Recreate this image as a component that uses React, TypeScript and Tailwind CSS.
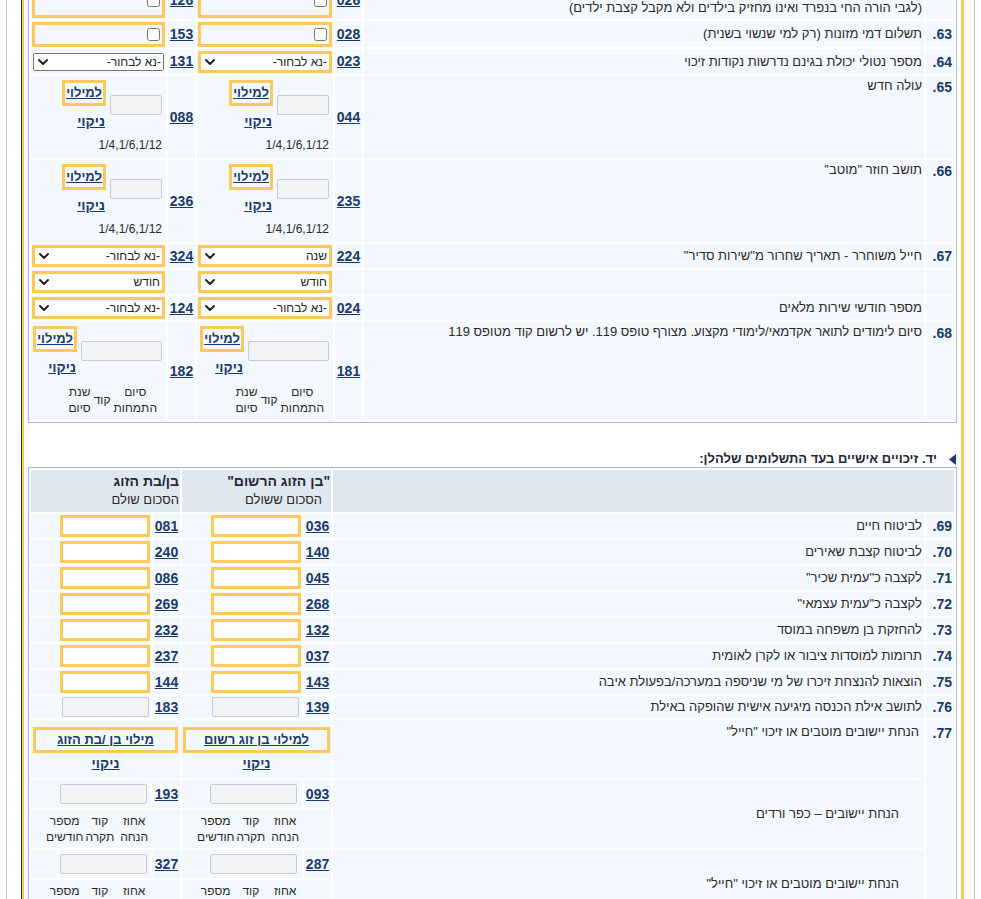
import React from 'react';
import { ChevronDown } from 'lucide-react';

const CELL = 'bg-[#f3f8fe]';
const YEL = 'border-[3px] border-[#fdc95c]';
const NUM = `${CELL} text-right pr-[2px] font-bold text-[14px] text-[#1b3a68]`;
const LABEL = `${CELL} text-right pr-[2px]`;
const CODE = `${CELL} text-center`;

const Code = ({ children, size = 'text-[14px]' }: { children: React.ReactNode; size?: string }) => (
  <a href="#" className={`font-bold underline ${size} text-[#1b3a68]`}>
    {children}
  </a>
);

const Check = ({ h = 'h-[25px]' }: { h?: string }) => (
  <div className={`${YEL} ${h} flex items-center pr-[2px]`}>
    <input type="checkbox" className="w-[13px] h-[13px]" />
  </div>
);

const Select = ({ value, hl = true }: { value: string; hl?: boolean }) => (
  <div
    className={`relative bg-white ${
      hl ? `${YEL} h-[22px]` : 'border border-[#767676] rounded-[2px] h-[18px] mx-[1px]'
    }`}
  >
    <select className="appearance-none w-full h-full bg-white text-[12px] leading-[14px] pr-[2px] pl-5 text-[#222] outline-none">
      <option>{value}</option>
    </select>
    <ChevronDown
      size={16}
      strokeWidth={3}
      className="absolute left-[1px] top-1/2 -translate-y-1/2 pointer-events-none text-[#222]"
    />
  </div>
);

const Disabled = ({ w }: { w: string }) => (
  <input disabled className={`${w} h-[20px] border border-[#c8ccd2] rounded-[2px] bg-[#f2f3f5] block`} />
);

const FillBlock = ({ inputW, footer }: { inputW: string; footer: React.ReactNode }) => (
  <div className="pt-[4px] pr-[4px] pb-[4px]">
    <div className="flex items-center gap-[4px]">
      <Disabled w={inputW} />
      <div className="flex flex-col items-start">
        <div className={`${YEL} px-[1px] leading-[20px]`}>
          <Code size="text-[13px]">למילוי</Code>
        </div>
        <div className="mt-[7px] leading-[16px] pr-[1px]">
          <Code>ניקוי</Code>
        </div>
      </div>
    </div>
    {footer}
  </div>
);

const Fractions = () => <div className="mt-[7px] text-[12px] leading-[16px] text-right">1/4,1/6,1/12</div>;

const StudyLabels = () => (
  <div className="mt-[8px] flex items-center gap-[3px] text-[12px] leading-[16px] pr-[5px]">
    <div className="text-center">
      סיום
      <br />
      התמחות
    </div>
    <div>קוד</div>
    <div className="text-center">
      שנת
      <br />
      סיום
    </div>
  </div>
);

const DiscountLabels = () => (
  <div className="flex items-center text-[12px] leading-[16px] pr-[32px]">
    <div className="text-center ml-[6px]">
      אחוז
      <br />
      הנחה
    </div>
    <div className="text-center ml-[2px]">
      קוד
      <br />
      תקרה
    </div>
    <div className="text-center">
      מספר
      <br />
      חודשים
    </div>
  </div>
);

const AmountInput = () => <input className={`${YEL} w-[90px] h-[22px] bg-white block`} />;

const amountRows = [
  { n: '69', label: 'לביטוח חיים', a: '036', b: '081' },
  { n: '70', label: 'לביטוח קצבת שאירים', a: '140', b: '240' },
  { n: '71', label: 'לקצבה כ"עמית שכיר"', a: '045', b: '086' },
  { n: '72', label: 'לקצבה כ"עמית עצמאי"', a: '268', b: '269' },
  { n: '73', label: 'להחזקת בן משפחה במוסד', a: '132', b: '232' },
  { n: '74', label: 'תרומות למוסדות ציבור או לקרן לאומית', a: '037', b: '237' },
  { n: '75', label: 'הוצאות להנצחת זיכרו של מי שניספה במערכה/בפעולת איבה', a: '143', b: '144' },
];

const App = () => {
  return (
    <div
      dir="rtl"
      className="w-[981px] h-[899px] overflow-hidden bg-white font-['Liberation_Sans',Arial,'DejaVu_Sans',sans-serif] text-[13px] leading-[16px] text-[#2a2a2a]"
    >
      <div className="mr-[6px] w-[969px] border-x border-[#c4c4c4] pl-[14px] pr-[10px]">
        <div className="border-l border-[#1e3a66]">
          <div className="border-l-2 border-r-[3px] border-[#fdc95c] pl-[4px] pr-[4px] pb-[60px]">
            {/* section יג – continued */}
            <table className="w-[929px] -mt-[22px] table-fixed border-separate border-spacing-[2px] border border-[#a8bcd5]">
              <colgroup>
                <col className="w-[28px]" />
                <col />
                <col className="w-[27px]" />
                <col className="w-[136px]" />
                <col className="w-[27px]" />
                <col className="w-[135px]" />
              </colgroup>
              <tbody>
                <tr className="h-[38px]">
                  <td className={`${NUM} align-top pt-[3px]`}>62.</td>
                  <td className={LABEL}>
                    הורה החי בנפרד
                    <br />
                    (לגבי הורה החי בנפרד ואינו מחזיק בילדים ולא מקבל קצבת ילדים)
                  </td>
                  <td className={CODE}>
                    <Code>026</Code>
                  </td>
                  <td className={`${CELL} px-[1px]`}>
                    <Check h="h-[36px]" />
                  </td>
                  <td className={CODE}>
                    <Code>126</Code>
                  </td>
                  <td className={`${CELL} px-[1px]`}>
                    <Check h="h-[36px]" />
                  </td>
                </tr>
                <tr className="h-[26px]">
                  <td className={NUM}>63.</td>
                  <td className={LABEL}>תשלום דמי מזונות (רק למי שנשוי בשנית)</td>
                  <td className={CODE}>
                    <Code>028</Code>
                  </td>
                  <td className={`${CELL} px-[1px]`}>
                    <Check />
                  </td>
                  <td className={CODE}>
                    <Code>153</Code>
                  </td>
                  <td className={`${CELL} px-[1px]`}>
                    <Check />
                  </td>
                </tr>
                <tr className="h-[25px]">
                  <td className={NUM}>64.</td>
                  <td className={LABEL}>מספר נטולי יכולת בגינם נדרשות נקודות זיכוי</td>
                  <td className={CODE}>
                    <Code>023</Code>
                  </td>
                  <td className={`${CELL} px-[1px]`}>
                    <Select value="-נא לבחור-" />
                  </td>
                  <td className={CODE}>
                    <Code>131</Code>
                  </td>
                  <td className={`${CELL} px-[1px]`}>
                    <Select value="-נא לבחור-" hl={false} />
                  </td>
                </tr>
                <tr className="h-[82px]">
                  <td className={`${NUM} align-top pt-[3px]`}>65.</td>
                  <td className={`${LABEL} align-top pt-[2px]`}>עולה חדש</td>
                  <td className={CODE}>
                    <Code>044</Code>
                  </td>
                  <td className={`${CELL} align-top`}>
                    <FillBlock inputW="w-[52px]" footer={<Fractions />} />
                  </td>
                  <td className={CODE}>
                    <Code>088</Code>
                  </td>
                  <td className={`${CELL} align-top`}>
                    <FillBlock inputW="w-[52px]" footer={<Fractions />} />
                  </td>
                </tr>
                <tr className="h-[82px]">
                  <td className={`${NUM} align-top pt-[3px]`}>66.</td>
                  <td className={`${LABEL} align-top pt-[2px]`}>תושב חוזר "מוטב"</td>
                  <td className={CODE}>
                    <Code>235</Code>
                  </td>
                  <td className={`${CELL} align-top`}>
                    <FillBlock inputW="w-[52px]" footer={<Fractions />} />
                  </td>
                  <td className={CODE}>
                    <Code>236</Code>
                  </td>
                  <td className={`${CELL} align-top`}>
                    <FillBlock inputW="w-[52px]" footer={<Fractions />} />
                  </td>
                </tr>
                <tr className="h-[24px]">
                  <td className={NUM}>67.</td>
                  <td className={LABEL}>חייל משוחרר - תאריך שחרור מ"שירות סדיר"</td>
                  <td className={CODE}>
                    <Code>224</Code>
                  </td>
                  <td className={`${CELL} px-[1px]`}>
                    <Select value="שנה" />
                  </td>
                  <td className={CODE}>
                    <Code>324</Code>
                  </td>
                  <td className={`${CELL} px-[1px]`}>
                    <Select value="-נא לבחור-" />
                  </td>
                </tr>
                <tr className="h-[24px]">
                  <td className={NUM}></td>
                  <td className={LABEL}></td>
                  <td className={CODE}></td>
                  <td className={`${CELL} px-[1px]`}>
                    <Select value="חודש" />
                  </td>
                  <td className={CODE}></td>
                  <td className={`${CELL} px-[1px]`}>
                    <Select value="חודש" />
                  </td>
                </tr>
                <tr className="h-[24px]">
                  <td className={NUM}></td>
                  <td className={LABEL}>מספר חודשי שירות מלאים</td>
                  <td className={CODE}>
                    <Code>024</Code>
                  </td>
                  <td className={`${CELL} px-[1px]`}>
                    <Select value="-נא לבחור-" />
                  </td>
                  <td className={CODE}>
                    <Code>124</Code>
                  </td>
                  <td className={`${CELL} px-[1px]`}>
                    <Select value="-נא לבחור-" />
                  </td>
                </tr>
                <tr className="h-[98px]">
                  <td className={`${NUM} align-top pt-[3px]`}>68.</td>
                  <td className={`${LABEL} align-top pt-[2px]`}>
                    סיום לימודים לתואר אקדמאי/לימודי מקצוע. מצורף טופס 119. יש לרשום קוד מטופס 119
                  </td>
                  <td className={CODE}>
                    <Code>181</Code>
                  </td>
                  <td className={`${CELL} align-top`}>
                    <FillBlock inputW="w-[81px]" footer={<StudyLabels />} />
                  </td>
                  <td className={CODE}>
                    <Code>182</Code>
                  </td>
                  <td className={`${CELL} align-top`}>
                    <FillBlock inputW="w-[81px]" footer={<StudyLabels />} />
                  </td>
                </tr>
              </tbody>
            </table>

            {/* section יד */}
            <div className="mt-[28px] h-[16px] flex items-center gap-[12px] pr-[1px]">
              <svg width="7" height="11" viewBox="0 0 7 11">
                <polygon points="7,0 7,11 0,5.5" fill="#1b3a68" />
              </svg>
              <span className="font-bold text-[#1e2838]">יד. זיכויים אישיים בעד התשלומים שלהלן:</span>
            </div>

            <table className="w-[929px] table-fixed border-separate border-spacing-[2px] border border-[#a8bcd5]">
              <colgroup>
                <col className="w-[28px]" />
                <col />
                <col className="w-[27px]" />
                <col className="w-[120px]" />
                <col className="w-[27px]" />
                <col className="w-[120px]" />
              </colgroup>
              <tbody>
                <tr className="h-[42px]">
                  <td colSpan={2} className="bg-[#e1e7ef]"></td>
                  <td colSpan={2} className="bg-[#e1e7ef] align-top pt-[3px] pr-[1px] text-right">
                    <div className="font-bold text-[14px] text-[#1e2838]">"בן הזוג הרשום"</div>
                    <div className="pr-[8px] mt-[3px]">הסכום ששולם</div>
                  </td>
                  <td colSpan={2} className="bg-[#e1e7ef] align-top pt-[3px] pr-[1px] text-right">
                    <div className="font-bold text-[14px] text-[#1e2838]">בן/בת הזוג</div>
                    <div className="mt-[3px]">הסכום שולם</div>
                  </td>
                </tr>
                {amountRows.map((r) => (
                  <tr key={r.n} className="h-[24px]">
                    <td className={NUM}>{r.n}.</td>
                    <td className={LABEL}>{r.label}</td>
                    <td className={CODE}>
                      <Code>{r.a}</Code>
                    </td>
                    <td className={`${CELL} pr-[1px]`}>
                      <AmountInput />
                    </td>
                    <td className={CODE}>
                      <Code>{r.b}</Code>
                    </td>
                    <td className={`${CELL} pr-[1px]`}>
                      <AmountInput />
                    </td>
                  </tr>
                ))}
                <tr className="h-[22px]">
                  <td className={NUM}>76.</td>
                  <td className={LABEL}>לתושב אילת הכנסה מיגיעה אישית שהופקה באילת</td>
                  <td className={CODE}>
                    <Code>139</Code>
                  </td>
                  <td className={`${CELL} pr-[3px]`}>
                    <Disabled w="w-[87px]" />
                  </td>
                  <td className={CODE}>
                    <Code>183</Code>
                  </td>
                  <td className={`${CELL} pr-[2px]`}>
                    <Disabled w="w-[87px]" />
                  </td>
                </tr>
                <tr className="h-[58px]">
                  <td rowSpan={5} className={`${NUM} align-top pt-[5px]`}>
                    77.
                  </td>
                  <td className={`${LABEL} align-top pt-[4px] pr-[5px]`}>הנחת יישובים מוטבים או זיכוי "חייל"</td>
                  <td colSpan={2} className={`${CELL} px-[1px]`}>
                    <div className={`${YEL} text-center leading-[20px]`}>
                      <Code size="text-[13px]">למילוי בן זוג רשום</Code>
                    </div>
                    <div className="text-center mt-[2px]">
                      <Code>ניקוי</Code>
                    </div>
                  </td>
                  <td colSpan={2} className={`${CELL} px-[2px]`}>
                    <div className={`${YEL} text-center leading-[20px]`}>
                      <Code size="text-[13px]">מילוי בן /בת הזוג</Code>
                    </div>
                    <div className="text-center mt-[2px]">
                      <Code>ניקוי</Code>
                    </div>
                  </td>
                </tr>
                <tr className="h-[28px]">
                  <td rowSpan={2} className={`${LABEL} pr-[25px]`}>
                    הנחת יישובים – כפר ורדים
                  </td>
                  <td className={CODE}>
                    <Code>093</Code>
                  </td>
                  <td className={`${CELL} pr-[5px]`}>
                    <Disabled w="w-[87px]" />
                  </td>
                  <td className={CODE}>
                    <Code>193</Code>
                  </td>
                  <td className={`${CELL} pr-[4px]`}>
                    <Disabled w="w-[87px]" />
                  </td>
                </tr>
                <tr className="h-[38px]">
                  <td colSpan={2} className={CELL}>
                    <DiscountLabels />
                  </td>
                  <td colSpan={2} className={CELL}>
                    <DiscountLabels />
                  </td>
                </tr>
                <tr className="h-[28px]">
                  <td rowSpan={2} className={`${LABEL} pr-[25px]`}>
                    הנחת יישובים מוטבים או זיכוי "חייל"
                  </td>
                  <td className={CODE}>
                    <Code>287</Code>
                  </td>
                  <td className={`${CELL} pr-[5px]`}>
                    <Disabled w="w-[87px]" />
                  </td>
                  <td className={CODE}>
                    <Code>327</Code>
                  </td>
                  <td className={`${CELL} pr-[4px]`}>
                    <Disabled w="w-[87px]" />
                  </td>
                </tr>
                <tr className="h-[38px]">
                  <td colSpan={2} className={CELL}>
                    <DiscountLabels />
                  </td>
                  <td colSpan={2} className={CELL}>
                    <DiscountLabels />
                  </td>
                </tr>
              </tbody>
            </table>
          </div>
        </div>
      </div>
    </div>
  );
};

export default App;
